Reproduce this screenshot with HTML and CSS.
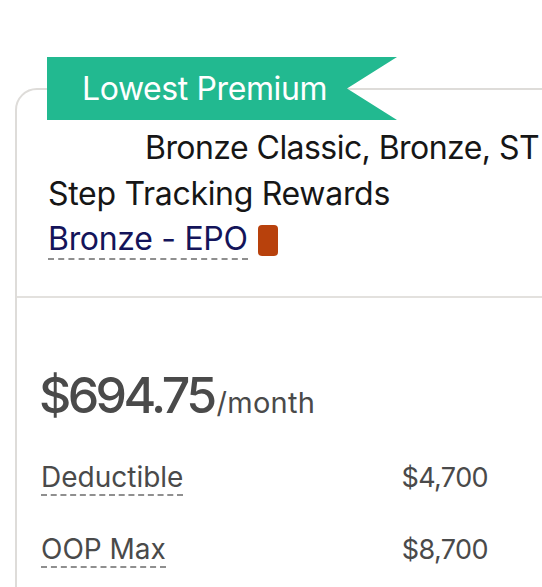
FILE: index.html
```html
<!DOCTYPE html>
<html>
<head>
<meta charset="utf-8">
<title>Plan card</title>
<link rel="stylesheet" href="styles.css">
</head>
<body>
<div class="wrap">
  <div class="card">
    <div class="ribbon">Lowest Premium</div>
    <div class="head">
      <div class="title">
        <span class="t1">Bronze Classic, Bronze, ST</span>
        <span class="t2">Step Tracking Rewards</span>
      </div>
      <div class="type">
        <span class="tip">Bronze - EPO</span>
        <span class="tag"></span>
      </div>
    </div>
    <div class="body">
      <div class="price">$694.75<span class="per">/month</span></div>
      <div class="row">
        <span class="tip">Deductible</span>
        <span class="val">$4,700</span>
      </div>
      <div class="row">
        <span class="tip">OOP Max</span>
        <span class="val">$8,700</span>
      </div>
    </div>
  </div>
</div>
</body>
</html>
```

FILE: styles.css
```css
*{ padding:0; margin:0; box-sizing:border-box;}
html,body{ background:#fff; overflow:hidden;}
body{ font-family:Inter, "Noto Sans", sans-serif; color:#161616;}
.wrap{ width:542px; height:587px; padding:88px 0 0 15px; overflow:hidden;}
.card{ position:relative; width:600px; height:560px; border:2px solid #dedcd9; border-radius:22px;}

/* ribbon over the top border */
.ribbon{ position:absolute; left:30px; top:-33px; width:350px; height:63px; background:#22b990; color:#fff; font-size:32px; line-height:63px; padding-left:35px; letter-spacing:-0.4px;
  clip-path:polygon(0 0, 100% 0, calc(100% - 50px) 50%, 100% 100%, 0 100%);}

.head{ padding:35px 0 0 31px; height:208px; border-bottom:2px solid #e3e1de;}
.title span{ display:block; white-space:nowrap; font-size:32px; line-height:46px; letter-spacing:-0.3px;}
.title .t1{ padding-left:97px; letter-spacing:-0.55px;}
.type{ display:flex; align-items:center; gap:10px; margin-top:4px; height:38px;}
.type .tip{ color:#14145a; font-size:32px; line-height:38px; letter-spacing:-0.3px;}
.tag{ width:20px; height:31px; background:#b8410c; border-radius:4px;}
.tip{ border-bottom:2px dashed #8f8f8f;}

.body{ padding:67px 0 0 24px; color:#4a4a4a;}
.price{ font-size:50px; font-weight:500; letter-spacing:-3.6px; line-height:60px; margin-left:-2px;}
.per{ font-size:29px; font-weight:400; letter-spacing:0.3px; margin-left:3px;}
.row{ display:flex; justify-content:space-between; align-items:baseline; width:447px; margin-top:36px; font-size:28px; line-height:34px;}
.price + .row{ margin-top:27px;}
.val{ font-size:27px; letter-spacing:-0.6px;}
```
